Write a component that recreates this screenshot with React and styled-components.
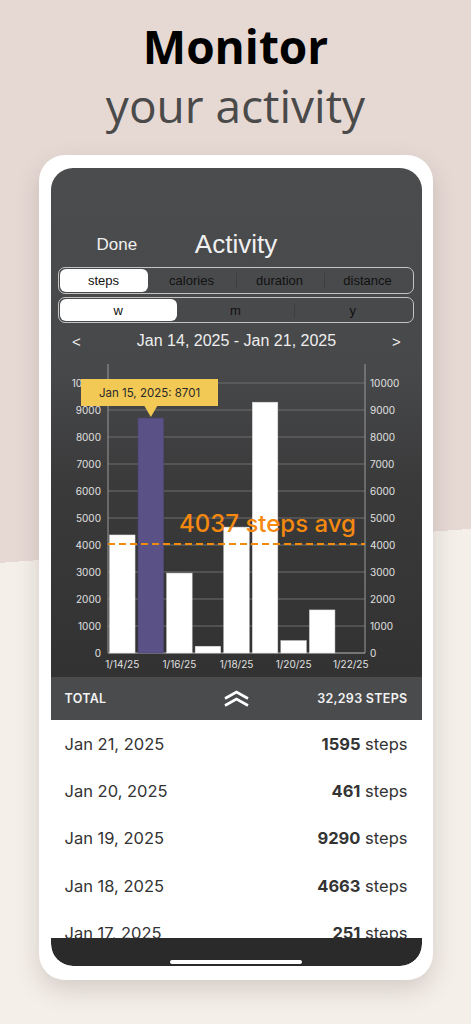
import React from 'react'
import styled, { createGlobalStyle } from 'styled-components'

const GlobalStyle = createGlobalStyle`
  html, body {
    margin: 0;
    padding: 0;
  }
  body {
    font-family: "Open Sans", sans-serif;
  }
`

const Page = styled.div`
  height: 1024px;
  overflow: hidden;
  box-sizing: border-box;
  padding-top: 17px;
  background: linear-gradient(175.87deg, #e6d9d4 53.2%, #f4efe9 53.2%);
`

const Headline = styled.h1`
  margin: 0;
  text-align: center;
  font-family: "Open Sans", sans-serif;
  font-size: 46px;
  line-height: 59px;
  font-weight: 400;
  color: #4a4a4a;
`

const Strong = styled.span`
  display: block;
  font-weight: 700;
  color: #000;
`

const Phone = styled.div`
  width: 394px;
  margin: 20px auto 0;
  padding: 13px 11px 14px 12px;
  box-sizing: border-box;
  background: #fff;
  border-radius: 26px;
  box-shadow: 0 10px 24px rgba(90, 70, 60, 0.2);
`

const Screen = styled.div`
  display: flex;
  flex-direction: column;
  border-radius: 22px;
  overflow: hidden;
  background: #fff;
`

const Top = styled.div`
  background: linear-gradient(#4b4c4e 0%, #47484a 40%, #3a3a3b 62%, #323232 100%);
`

const Header = styled.div`
  padding-top: 61px;
  font-family: "Liberation Sans", Arial, sans-serif;
  color: #f0f0f0;
`

const NavRow = styled.div`
  display: grid;
  grid-template-columns: 1fr auto 1fr;
  align-items: center;
  height: 30px;
  margin-bottom: 8px;
`

const Done = styled.span`
  padding-left: 46px;
  font-size: 17px;
`

const Title = styled.span`
  font-size: 26px;
`

const Segmented = styled.div`
  display: flex;
  height: ${(p) => p.$h}px;
  margin: 0 8px ${(p) => p.$mb}px 7px;
  padding: 1px;
  box-sizing: border-box;
  border: 1.5px solid #c4c4c4;
  border-radius: 7px;
`

const Segment = styled.div`
  position: relative;
  flex: 1;
  display: flex;
  align-items: center;
  justify-content: center;
  font-size: 13px;
  color: #111;
  border-radius: 6px;
  background: ${(p) => (p.$active ? '#fff' : 'transparent')};

  &::before {
    content: '';
    display: ${(p) => (p.$sep ? 'block' : 'none')};
    position: absolute;
    left: 0;
    top: 4px;
    bottom: 4px;
    width: 1px;
    background: rgba(0, 0, 0, 0.14);
  }
`

const DateRow = styled.div`
  display: flex;
  align-items: center;
  justify-content: space-between;
  height: 34px;
  padding: 0 19px 0 20px;
  font-size: 16px;
  color: #eeeeee;
`

const Arrow = styled.span`
  font-size: 15px;
  width: 12px;
  text-align: center;
`

const ChartArea = styled.div`
  height: 319px;
`

const TotalBar = styled.div`
  display: grid;
  grid-template-columns: 1fr auto 1fr;
  align-items: center;
  height: 43px;
  padding: 0 14px;
  background: #4a4b4d;
  font-family: Inter, "Liberation Sans", sans-serif;
  font-size: 12.5px;
  font-weight: 600;
  color: #f2f2f2;
  letter-spacing: 0.3px;
`

const TotalRight = styled.span`
  justify-self: end;
`

const List = styled.div`
  height: 218px;
  overflow: hidden;
  background: #fff;
  font-family: Inter, "Liberation Sans", sans-serif;
  color: #333;
`

const Row = styled.div`
  display: flex;
  align-items: center;
  justify-content: space-between;
  height: 47.3px;
  padding: 0 14px;
  font-size: 16.5px;
`

const Value = styled.span`
  b {
    font-weight: 700;
  }
`

const BottomBar = styled.div`
  display: flex;
  justify-content: center;
  height: 28px;
  padding-top: 22px;
  box-sizing: border-box;
  background: #2a2a2a;
  border-radius: 0 0 22px 22px;
`

const HomeIndicator = styled.div`
  width: 132px;
  height: 4px;
  border-radius: 2px;
  background: #fff;
`

const bars = [
  { date: 'Jan 14, 2025', v: 4372 },
  { date: 'Jan 15, 2025', v: 8701 },
  { date: 'Jan 16, 2025', v: 2960 },
  { date: 'Jan 17, 2025', v: 251 },
  { date: 'Jan 18, 2025', v: 4663 },
  { date: 'Jan 19, 2025', v: 9290 },
  { date: 'Jan 20, 2025', v: 461 },
  { date: 'Jan 21, 2025', v: 1595 },
]

const X0 = 57
const X1 = 314
const Y0 = 295
const SCALE = 0.027
const SLOT = (X1 - X0) / 9
const yOf = (v) => Y0 - v * SCALE

const Chart = () => {
  const ticks = [0, 1000, 2000, 3000, 4000, 5000, 6000, 7000, 8000, 9000, 10000]
  const xLabels = ['1/14/25', '1/16/25', '1/18/25', '1/20/25', '1/22/25']
  const avg = 4037
  const sel = 1
  const selCx = X0 + SLOT * sel + SLOT / 2
  return (
    <svg width="371" height="319" viewBox="0 0 371 319" style={{ display: 'block' }}>
      <g fontFamily="Inter, 'Liberation Sans', sans-serif" fontSize="10" fill="#e0e0e0">
        {ticks.map((t) => (
          <g key={t}>
            <line x1={X0} x2={X1} y1={yOf(t)} y2={yOf(t)} stroke="#6e6e6e" strokeWidth="1" />
            <text x={50} y={yOf(t) + 3.5} textAnchor="end">{t}</text>
            <text x={319} y={yOf(t) + 3.5}>{t}</text>
          </g>
        ))}
        <line x1={X0} x2={X0} y1={6} y2={Y0} stroke="#9a9a9a" />
        <line x1={X1} x2={X1} y1={6} y2={Y0} stroke="#9a9a9a" />
        <line x1={X0} x2={X1} y1={Y0} y2={Y0} stroke="#9a9a9a" />
        {bars.map((b, i) => (
          <rect
            key={b.date}
            x={X0 + SLOT * i + 1.5}
            y={yOf(b.v)}
            width={SLOT - 3}
            height={b.v * SCALE}
            fill={i === sel ? '#5a5286' : '#ffffff'}
            stroke={i === sel ? '#4d4677' : '#d0d0d0'}
            strokeWidth="0.5"
          />
        ))}
        {xLabels.map((l, i) => (
          <text key={l} x={X0 + SLOT * (i * 2) + SLOT / 2} y={310} textAnchor="middle">{l}</text>
        ))}
      </g>
      <line x1={X0} x2={X1} y1={yOf(avg)} y2={yOf(avg)} stroke="#f28a0d" strokeWidth="2" strokeDasharray="7 4" />
      <text x={305} y={174} textAnchor="end" fontFamily="Inter, 'Liberation Sans', sans-serif" fontSize="24" fontWeight="500" fill="#f5890f">
        {avg} steps avg
      </text>
      <rect x={30} y={21} width={137} height={27} fill="#f2c955" />
      <polygon points={`${selCx - 7},47 ${selCx + 7},47 ${selCx},${yOf(8701) - 1}`} fill="#f2c955" />
      <text x={98.5} y={38.5} textAnchor="middle" fontFamily="Inter, 'Liberation Sans', sans-serif" fontSize="11.5" fill="#2a2a2a">
        Jan 15, 2025: 8701
      </text>
    </svg>
  )
}

const DoubleChevron = () => (
  <svg width="27" height="17" viewBox="0 0 27 17" fill="none" stroke="#fff" strokeWidth="2.6" strokeLinejoin="miter">
    <polyline points="2,8.5 13.5,2 25,8.5" />
    <polyline points="2,15.5 13.5,9 25,15.5" />
  </svg>
)

const rows = [...bars].reverse().slice(0, 5)

const App = () => {
  return (
    <Page>
      <GlobalStyle />
      <Headline>
        <Strong>Monitor</Strong>
        your activity
      </Headline>

      <Phone>
        <Screen>
          <Top>
            <Header>
              <NavRow>
                <Done>Done</Done>
                <Title>Activity</Title>
                <span />
              </NavRow>

              <Segmented $h={27} $mb={3}>
                <Segment $active>steps</Segment>
                <Segment>calories</Segment>
                <Segment $sep>duration</Segment>
                <Segment $sep>distance</Segment>
              </Segmented>

              <Segmented $h={26} $mb={1}>
                <Segment $active>w</Segment>
                <Segment>m</Segment>
                <Segment $sep>y</Segment>
              </Segmented>

              <DateRow>
                <Arrow>&lt;</Arrow>
                <span>Jan 14, 2025 - Jan 21, 2025</span>
                <Arrow>&gt;</Arrow>
              </DateRow>
            </Header>

            <ChartArea>
              <Chart />
            </ChartArea>
          </Top>

          <TotalBar>
            <span>TOTAL</span>
            <DoubleChevron />
            <TotalRight>32,293 STEPS</TotalRight>
          </TotalBar>

          <List>
            {rows.map((r) => (
              <Row key={r.date}>
                <span>{r.date}</span>
                <Value><b>{r.v}</b> steps</Value>
              </Row>
            ))}
          </List>

          <BottomBar>
            <HomeIndicator />
          </BottomBar>
        </Screen>
      </Phone>
    </Page>
  )
}

export default App
